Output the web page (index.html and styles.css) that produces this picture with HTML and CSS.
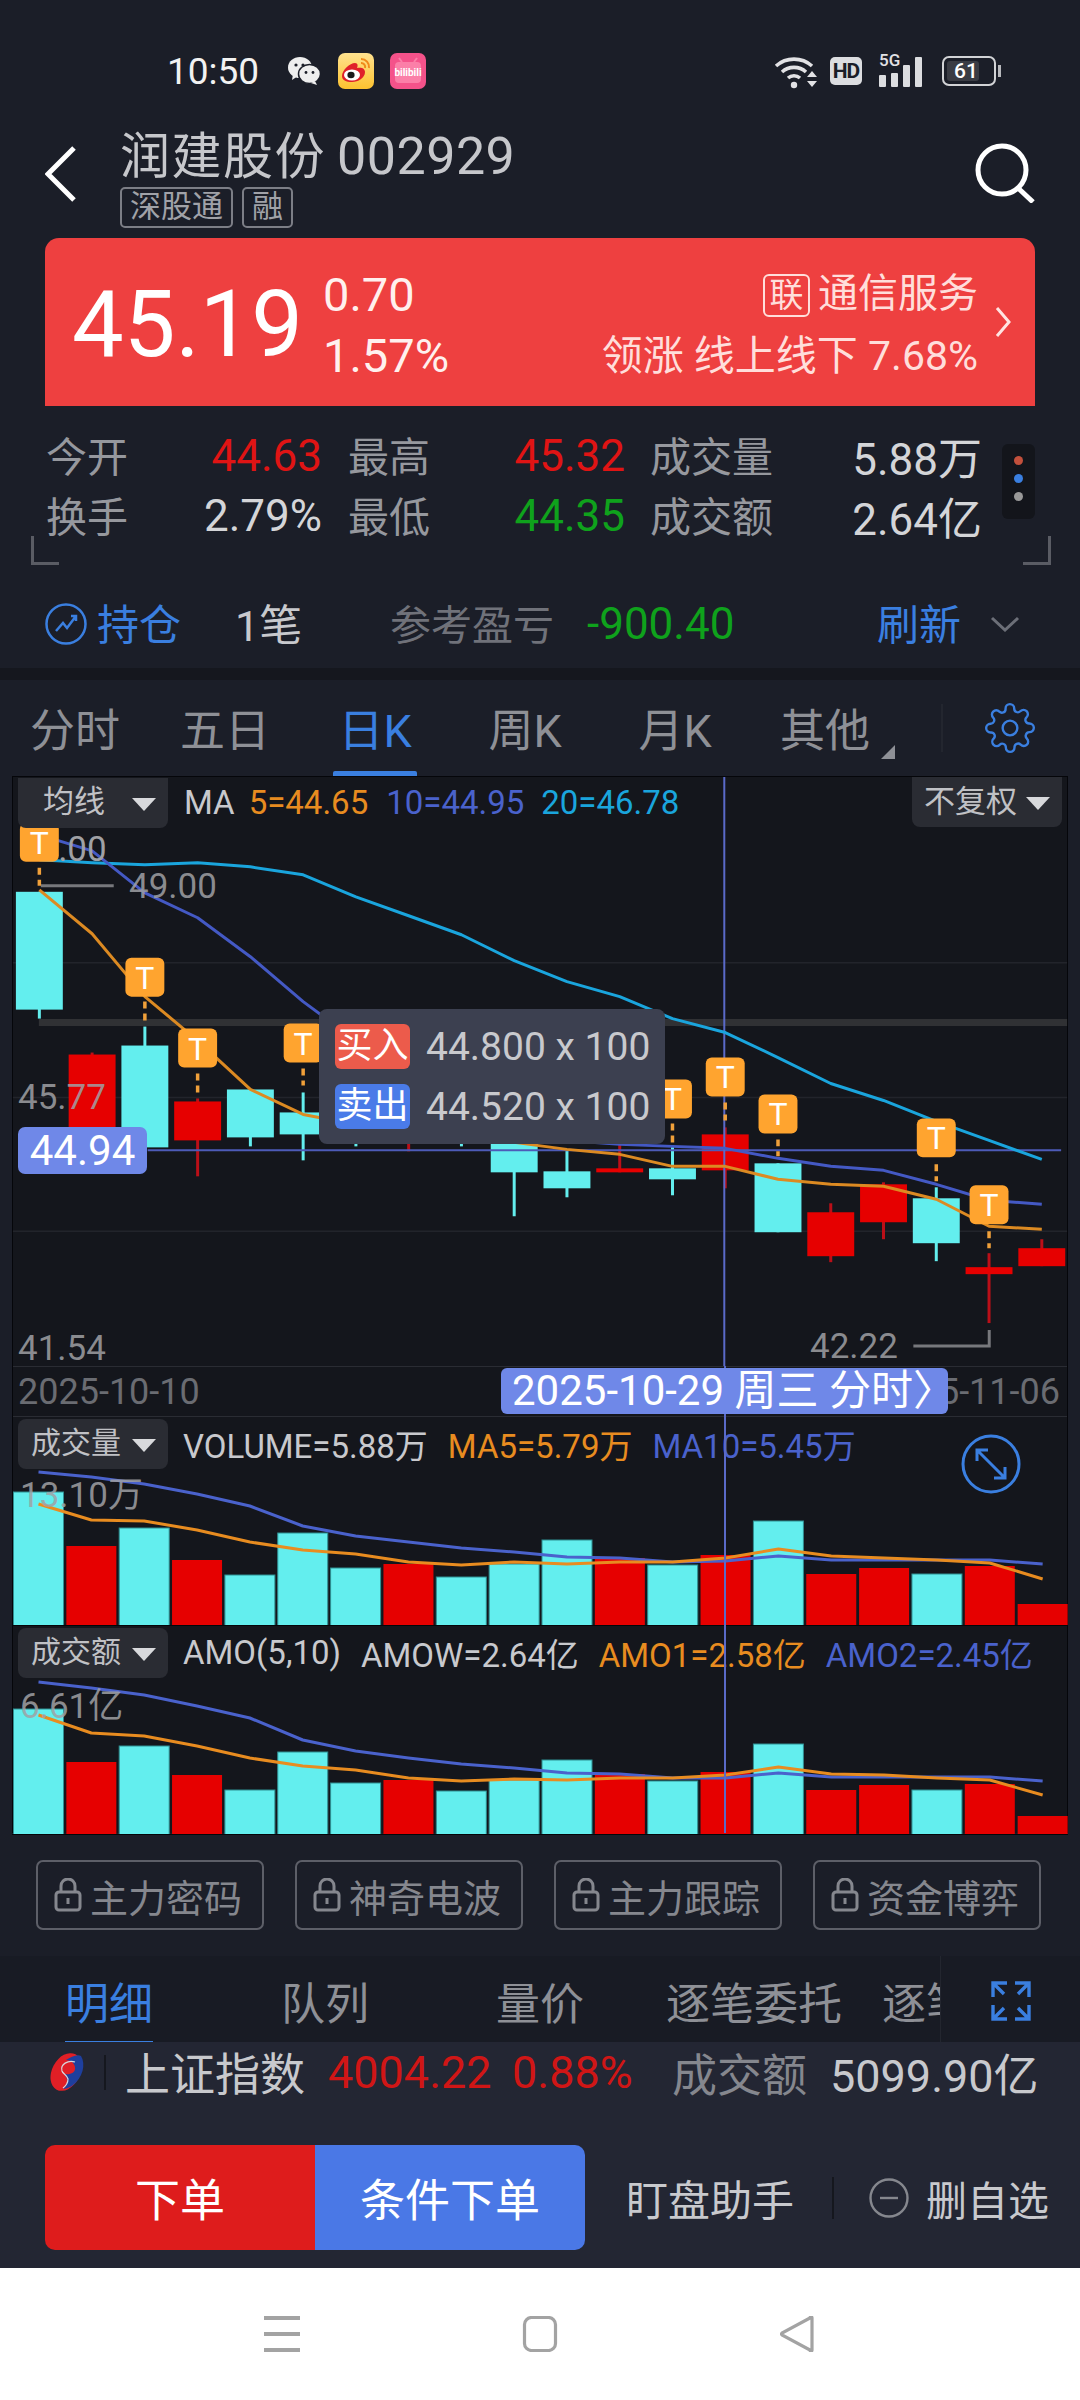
FILE: index.html
```html
<!DOCTYPE html>
<html lang="zh-CN">
  <head>
    <meta charset="UTF-8" />
    <meta name="viewport" content="width=device-width, initial-scale=1.0" />
    <title>润建股份 002929</title>
    <link rel="stylesheet" href="styles.css">
  </head>
  <body>
    <div class="status">
      <span class="clock">10:50</span>
      <svg class="ic-wechat" viewBox="0 0 32 28">
        <ellipse cx="12" cy="10.5" rx="12" ry="10.5" fill="#eee"/>
        <path d="M5 17l-1 6 6-4z" fill="#eee"/>
        <ellipse cx="21.5" cy="17" rx="11" ry="9.5" fill="#eee" stroke="#1b1e28" stroke-width="1.5"/>
        <path d="M27 24l2 4-6-2z" fill="#eee"/>
        <circle cx="8" cy="8" r="1.6" fill="#1b1e28"/><circle cx="15" cy="8" r="1.6" fill="#1b1e28"/>
        <circle cx="18" cy="15.5" r="1.4" fill="#1b1e28"/><circle cx="25" cy="15.5" r="1.4" fill="#1b1e28"/>
      </svg>
      <svg class="ic-app ic-weibo" viewBox="0 0 36 36">
        <defs><linearGradient id="wb" x1="0" y1="0" x2="0" y2="1"><stop offset="0" stop-color="#ffe28f"/><stop offset="1" stop-color="#fdc22f"/></linearGradient></defs>
        <rect width="36" height="36" rx="7" fill="url(#wb)"/>
        <path d="M4 23c0-6 8-13 13-13 3 0 3 3 2 5 4-1 8 0 8 4 0 6-7 10-13 10-6 0-10-2-10-6z" fill="#e0202a"/>
        <ellipse cx="14" cy="22" rx="8" ry="5.5" fill="#fff"/>
        <ellipse cx="13" cy="22" rx="3.6" ry="3.2" fill="#1a1a1a"/>
        <path d="M23 6a8 8 0 0 1 8 9M23 10a4 4 0 0 1 4 5" fill="none" stroke="#f08a1a" stroke-width="2"/>
      </svg>
      <svg class="ic-app ic-bili" viewBox="0 0 36 36">
        <rect width="36" height="36" rx="7" fill="#f4528a"/>
        <rect x="5" y="9" width="26" height="21" rx="4" fill="#fb7fa8"/>
        <path d="M12 9l-3-4M24 9l3-4" stroke="#fb7fa8" stroke-width="2"/>
        <text x="18" y="23" class="bili-word">bilibili</text>
      </svg>
      <div class="status-right">
        <svg class="ic-wifi" viewBox="0 0 43 35">
          <path d="M2 12a27 27 0 0 1 36 0M8 18a18 18 0 0 1 24 0M14 24a9 9 0 0 1 12 0" fill="none" stroke="#e2e2e5" stroke-width="3.6"/>
          <circle cx="20" cy="31" r="3.2" fill="#e2e2e5"/>
          <path d="M33 23l5-6 5 6zM33 27l10 0-5 6z" fill="#e2e2e5"/>
        </svg>
        <span class="hd">HD</span>
        <div class="signal">
          <span class="five-g">5G</span>
          <i class="bar b1"></i><i class="bar b2"></i><i class="bar b3"></i><i class="bar b4"></i>
        </div>
        <div class="battery"><span>61</span></div>
        <i class="battery-tip"></i>
      </div>
    </div>

    <header class="head">
      <svg class="back" viewBox="0 0 32 56"><path d="M29 2L3 28l26 26" fill="none" stroke="#fff" stroke-width="5"/></svg>
      <div class="head-title">
        <h1>润建股份<span>002929</span></h1>
        <div class="tags"><span>深股通</span><span>融</span></div>
      </div>
      <svg class="search" viewBox="0 0 60 60"><circle cx="27" cy="27" r="24" fill="none" stroke="#fff" stroke-width="5"/><path d="M43 45l15 14" stroke="#fff" stroke-width="5"/></svg>
    </header>

    <section class="quote">
      <div class="price">45.19</div>
      <div class="delta"><p>0.70</p><p>1.57%</p></div>
      <div class="sector">
        <p><b>联</b>通信服务</p>
        <p class="sector-lead">领涨 线上线下 7.68%</p>
      </div>
      <svg class="quote-arrow" viewBox="0 0 18 32"><path d="M3 2l12 14L3 30" fill="none" stroke="#ffe4e2" stroke-width="3"/></svg>
    </section>

    <section class="stats">
      <div class="stat-grid">
        <span class="lbl">今开</span><span class="val red">44.63</span>
        <span class="lbl lbl-b">最高</span><span class="val red">45.32</span>
        <span class="lbl lbl-c">成交量</span><span class="val">5.88万</span>
        <span class="lbl">换手</span><span class="val">2.79%</span>
        <span class="lbl lbl-b">最低</span><span class="val green">44.35</span>
        <span class="lbl lbl-c">成交额</span><span class="val">2.64亿</span>
      </div>
      <div class="dots"><i class="d-red"></i><i class="d-blue"></i><i class="d-grey"></i></div>
    </section>

    <section class="hold">
      <svg class="hold-ic" viewBox="0 0 42 42"><circle cx="21" cy="21" r="19.5" fill="none" stroke="#3a7fe0" stroke-width="2.5"/><path d="M11 28l7-8 4 5 9-12M26 13h5v5" fill="none" stroke="#3a7fe0" stroke-width="2.5"/></svg>
      <span class="hold-name">持仓</span>
      <span class="hold-count">1笔</span>
      <span class="hold-lbl">参考盈亏</span>
      <span class="hold-pnl">-900.40</span>
      <span class="hold-refresh">刷新</span>
      <svg class="hold-more" viewBox="0 0 30 16"><path d="M2 2l13 12L28 2" fill="none" stroke="#6c6f78" stroke-width="3"/></svg>
    </section>

    <div class="band"></div>

    <nav class="periods">
      <button>分时</button>
      <button>五日</button>
      <button class="valgt">日K</button>
      <button>周K</button>
      <button>月K</button>
      <button class="other">其他</button>
      <svg class="gear" viewBox="0 0 24 24"><circle cx="12" cy="12" r="3.4" fill="none" stroke="#3a7fe0" stroke-width="1.1"/><path d="M19.4 15a1.65 1.65 0 0 0 .33 1.82l.06.06a2 2 0 1 1-2.83 2.83l-.06-.06a1.65 1.65 0 0 0-2.82 1.17V21a2 2 0 1 1-4 0v-.09A1.65 1.65 0 0 0 7.3 19.7l-.06.06a2 2 0 1 1-2.83-2.83l.06-.06a1.65 1.65 0 0 0-1.17-2.82H3a2 2 0 1 1 0-4h.09A1.65 1.65 0 0 0 4.3 7.3l-.06-.06a2 2 0 1 1 2.83-2.83l.06.06a1.65 1.65 0 0 0 2.82-1.17V3a2 2 0 1 1 4 0v.09a1.65 1.65 0 0 0 2.82 1.17l.06-.06a2 2 0 1 1 2.83 2.83l-.06.06a1.65 1.65 0 0 0 1.17 2.82H21a2 2 0 1 1 0 4h-.09A1.65 1.65 0 0 0 19.4 15z" fill="none" stroke="#3a7fe0" stroke-width="1.1"/></svg>
    </nav>

    <section class="chart">
      <div class="pane pane-main">
        <svg id="svg-main" class="pane-svg" viewBox="12 776 1056 590"></svg>
        <div class="legend">
          <span class="pick">均线<i></i></span>
          <span class="lg-txt lg-ma">MA</span>
          <span class="orange">5=44.65</span>
          <span class="blue">10=44.95</span>
          <span class="sky">20=46.78</span>
          <span class="pick pick-right">不复权<i></i></span>
        </div>
        <span class="axis ax-max">49.00</span>
        <span class="axis ax-mid">45.77</span>
        <span class="axis ax-low">41.54</span>
        <span class="axis ax-min">42.22</span>
        <span class="now">44.94</span>
        <div class="trades">
          <p><b class="buy">买入</b>44.800 x 100</p>
          <p><b class="sell">卖出</b>44.520 x 100</p>
        </div>
      </div>

      <div class="dates">
        <span>2025-10-10</span><span>2025-11-06</span>
        <span class="date-pick">2025-10-29 周三 分时〉</span>
      </div>

      <div class="pane pane-vol">
        <svg id="svg-vol" class="pane-svg" viewBox="12 1417 1056 208"></svg>
        <div class="legend legend-sm">
          <span class="pick">成交量<i></i></span>
          <span class="lg-txt lg-first">VOLUME=5.88万</span>
          <span class="orange lg-next">MA5=5.79万</span>
          <span class="blue lg-next">MA10=5.45万</span>
        </div>
        <span class="axis ax-vol">13.10万</span>
        <svg class="zoom-ic" viewBox="0 0 60 60"><circle cx="30" cy="30" r="28" fill="none" stroke="#3a7fe0" stroke-width="3"/><path d="M16 16l28 28M16 27V16h11M44 33v11H33" fill="none" stroke="#3a7fe0" stroke-width="3"/></svg>
      </div>

      <div class="pane pane-amo">
        <svg id="svg-amo" class="pane-svg" viewBox="12 1625 1056 208"></svg>
        <div class="legend legend-sm">
          <span class="pick">成交额<i></i></span>
          <span class="lg-txt lg-first">AMO(5,10)</span>
          <span class="lg-txt lg-next">AMOW=2.64亿</span>
          <span class="orange lg-next">AMO1=2.58亿</span>
          <span class="blue lg-next">AMO2=2.45亿</span>
        </div>
        <span class="axis ax-amo">6.61亿</span>
      </div>

      <i class="cross-v"></i>
    </section>

    <section class="locks">
      <button><svg viewBox="0 0 28 34"><path d="M7 14V8a7 7 0 0 1 14 0v6" fill="none" stroke="#85878e" stroke-width="3"/><rect x="2" y="14" width="24" height="18" rx="3" fill="none" stroke="#85878e" stroke-width="3"/><rect x="12.5" y="20" width="3" height="6" fill="#85878e"/></svg>主力密码</button>
      <button><svg viewBox="0 0 28 34"><path d="M7 14V8a7 7 0 0 1 14 0v6" fill="none" stroke="#85878e" stroke-width="3"/><rect x="2" y="14" width="24" height="18" rx="3" fill="none" stroke="#85878e" stroke-width="3"/><rect x="12.5" y="20" width="3" height="6" fill="#85878e"/></svg>神奇电波</button>
      <button><svg viewBox="0 0 28 34"><path d="M7 14V8a7 7 0 0 1 14 0v6" fill="none" stroke="#85878e" stroke-width="3"/><rect x="2" y="14" width="24" height="18" rx="3" fill="none" stroke="#85878e" stroke-width="3"/><rect x="12.5" y="20" width="3" height="6" fill="#85878e"/></svg>主力跟踪</button>
      <button><svg viewBox="0 0 28 34"><path d="M7 14V8a7 7 0 0 1 14 0v6" fill="none" stroke="#85878e" stroke-width="3"/><rect x="2" y="14" width="24" height="18" rx="3" fill="none" stroke="#85878e" stroke-width="3"/><rect x="12.5" y="20" width="3" height="6" fill="#85878e"/></svg>资金博弈</button>
    </section>

    <nav class="details">
      <div class="detail-tabs">
        <button class="valgt">明细</button>
        <button class="t-queue">队列</button>
        <button class="t-price">量价</button>
        <button class="t-order">逐笔委托</button>
        <button class="t-deal">逐笔成交</button>
      </div>
      <svg class="full-ic" viewBox="0 0 42 42"><path d="M3 17V3h14M3 3l11 11M39 17V3H25M39 3L28 14M3 25v14h14M3 39l11-11M39 25v14H25M39 39L28 28" fill="none" stroke="#3a7fe0" stroke-width="3.4"/></svg>
    </nav>

    <section class="index-row">
      <svg class="sh-logo" viewBox="0 0 42 38"><ellipse cx="21" cy="19" rx="14" ry="20" transform="rotate(28 21 19)" fill="#e01f26"/><path d="M36 3c5 8 2 22-9 30-3 2-7 3-9 3 7-5 4-12 1-15 6 1 12-1 11-7-1-4-4-7-9-7 5-3 11-6 15-4z" fill="#1e3f9e"/><path d="M30 9c-7-2-15 2-13 9 1 3 5 4 6 8 0 3-1 6-5 9" fill="none" stroke="#d8d8de" stroke-width="1.2"/></svg>
      <i class="index-sep"></i>
      <span class="index-name">上证指数</span>
      <span class="index-val">4004.22</span>
      <span class="index-pct">0.88%</span>
      <span class="index-lbl">成交额</span>
      <span class="index-amt">5099.90亿</span>
    </section>

    <section class="actions">
      <button class="act-buy">下单</button>
      <button class="act-cond">条件下单</button>
      <span class="act-watch">盯盘助手</span>
      <i class="act-sep"></i>
      <svg class="act-ic" viewBox="0 0 40 42"><circle cx="20" cy="21" r="18.5" fill="none" stroke="#85878e" stroke-width="2.4"/><path d="M11 21h18" stroke="#85878e" stroke-width="2.4"/></svg>
      <span class="act-del">删自选</span>
    </section>

    <footer class="sysnav">
      <svg class="nav-ic" viewBox="0 0 36 36"><path d="M0 2h36M0 18h36M0 34h36" stroke="#a3a3a3" stroke-width="4"/></svg>
      <svg class="nav-ic" viewBox="0 0 36 36"><rect x="2.5" y="1.500" width="31" height="33" rx="7" fill="none" stroke="#a3a3a3" stroke-width="3.200"/></svg>
      <svg class="nav-ic" viewBox="0 0 36 36"><path d="M33 2v32a1 1 0 0 1-2 0L3 19a1.500 1.500 0 0 1 0-2L31 2a1 1 0 0 1 2 0z" fill="none" stroke="#a3a3a3" stroke-width="3.200"/></svg>
    </footer>

    <script src="chart.js"></script>
  </body>
</html>
```

FILE: styles.css
```css
* {
  box-sizing: border-box;
}
html,
body {
  margin: 0;
  padding: 0;
}
body {
  width: 1080px;
  height: 2400px;
  overflow: hidden;
  background-color: #1b1e28;
  font-family: Roboto, "Noto Sans CJK SC", sans-serif;
  color: #c8c9cd;
}
p,
h1 {
  margin: 0;
  font-weight: 400;
}
i {
  display: block;
}
button {
  background: none;
  border: none;
  padding: 0;
  font: inherit;
  color: inherit;
}
svg {
  display: block;
  flex: none;
}

/* status bar */
.status {
  height: 120px;
  display: flex;
  align-items: center;
  padding: 22px 0 0 167px;
  position: relative;
}
.clock {
  font-size: 37px;
  color: #f2f2f2;
  width: 121px;
}
.ic-wechat {
  width: 32px;
  height: 28px;
  margin-right: 18px;
}
.ic-app {
  width: 36px;
  height: 36px;
  margin-right: 16px;
}
.bili-word {
  font-size: 10px;
  font-weight: 700;
  fill: #fff;
  text-anchor: middle;
}
.status-right {
  margin-left: auto;
  display: flex;
  align-items: center;
  padding-right: 79px;
}
.ic-wifi {
  width: 43px;
  height: 35px;
  margin-right: 13px;
}
.hd {
  width: 32px;
  height: 28px;
  border-radius: 5px;
  background-color: #dcdde0;
  color: #1b1e28;
  font-size: 21px;
  font-weight: 700;
  letter-spacing: -1px;
  line-height: 28px;
  text-align: center;
  margin-right: 17px;
}
.signal {
  width: 47px;
  height: 32px;
  display: flex;
  align-items: flex-end;
  gap: 5px;
  position: relative;
  margin-right: 16px;
}
.five-g {
  position: absolute;
  left: 0;
  top: -4px;
  font-size: 17px;
  font-weight: 500;
  color: #e2e2e5;
  line-height: 18px;
}
.bar {
  width: 7px;
  background-color: #dcdde0;
  border-radius: 1px;
}
.b1 { height: 12px; }
.b2 { height: 14px; }
.b3 { height: 22px; }
.b4 { height: 30px; }
.battery {
  width: 54px;
  height: 30px;
  border: 2px solid #d2d3d6;
  border-radius: 7px;
  padding: 3px;
}
.battery span {
  display: block;
  width: 32px;
  height: 20px;
  background-color: #3a3c44;
  border-radius: 3px;
  font-size: 21px;
  font-weight: 500;
  line-height: 20px;
  color: #fff;
  padding-left: 7px;
}
.battery-tip {
  width: 3px;
  height: 12px;
  margin-left: 2px;
  background-color: #b8b9bd;
}

/* title */
.head {
  height: 118px;
  padding-left: 45px;
  padding-right: 45px;
  display: flex;
  align-items: flex-start;
}
.back {
  width: 32px;
  height: 56px;
  margin-top: 26px;
  margin-right: 43px;
}
.head-title {
  padding-top: 7px;
}
.head-title h1 {
  font-size: 50px;
  letter-spacing: 1.5px;
  line-height: 60px;
  color: #c6c7cb;
}
.head-title h1 span {
  font-size: 52px;
  letter-spacing: 0.5px;
  margin-left: 11px;
}
.tags {
  display: flex;
  gap: 9px;
}
.tags span {
  height: 41px;
  border: 2px solid #7c7e86;
  border-radius: 5px;
  padding: 0 8px;
  font-size: 31px;
  line-height: 36px;
  color: #a0a2a8;
}
.search {
  width: 60px;
  height: 60px;
  margin-left: auto;
  margin-top: 23px;
}

/* red quote card */
.quote {
  height: 168px;
  margin: 0 45px;
  padding: 0 23px 0 27px;
  border-radius: 14px 14px 0 0;
  background-color: #ee4040;
  color: #fff;
  display: flex;
  align-items: center;
}
.price {
  font-size: 92px;
  width: 251px;
  margin-bottom: -4px;
}
.delta {
  font-size: 47px;
  line-height: 61px;
  color: #fff0ee;
  padding-top: 5px;
}
.sector {
  margin-left: auto;
  text-align: right;
  color: #ffdedb;
  font-size: 40px;
  line-height: 63px;
  padding-top: 5px;
}
.sector-lead {
  font-size: 41px;
}
.sector b {
  display: inline-block;
  width: 47px;
  height: 43px;
  border: 2px solid #ffdedb;
  border-radius: 6px;
  margin-right: 8px;
  font-size: 34px;
  font-weight: 400;
  line-height: 38px;
  text-align: center;
}
.quote-arrow {
  width: 18px;
  height: 32px;
  margin-left: 16px;
}

/* open / high / low */
.stats {
  height: 162px;
  padding: 20px 0 0 46px;
  display: flex;
  align-items: flex-start;
  position: relative;
}
.stats::before,
.stats::after {
  content: "";
  position: absolute;
  top: 130px;
  width: 25px;
  height: 26px;
  border-bottom: 3px solid #5a5c64;
}
.stats::before {
  left: 31px;
  border-left: 3px solid #5a5c64;
}
.stats::after {
  left: 1023px;
  border-right: 3px solid #5a5c64;
}
.stat-grid {
  display: grid;
  grid-template-columns: 90px 186px 116px 187px 155px 202px;
  width: 936px;
  grid-auto-rows: 60px;
  align-items: center;
  white-space: nowrap;
}
.lbl {
  font-size: 41px;
  color: #96989e;
  margin-top: -5px;
}
.lbl-b {
  margin-left: 26px;
}
.lbl-c {
  margin-left: 25px;
}
.val {
  font-size: 44px;
  text-align: right;
  color: #d4d5d8;
}
.stat-grid .val.red {
  color: #e01414;
}
.stat-grid .val.green {
  color: #0fa21c;
}
.dots {
  width: 33px;
  height: 75px;
  margin-left: 20px;
  margin-top: 18px;
  padding: 12px 0;
  border-radius: 6px;
  background-color: #13151b;
  display: flex;
  flex-direction: column;
  align-items: center;
  gap: 9px;
}
.dots i {
  width: 9px;
  height: 9px;
  border-radius: 50%;
}
.d-red { background-color: #c2503c; }
.d-blue { background-color: #3a7fe0; }
.d-grey { background-color: #999; }

/* position row */
.hold {
  height: 100px;
  padding: 12px 0 0 45px;
  display: flex;
  align-items: center;
  font-size: 42px;
}
.hold-ic {
  width: 42px;
  height: 42px;
  margin-right: 10px;
}
.hold-name {
  color: #3a7fe0;
  width: 138px;
  margin-top: -5px;
}
.hold-count {
  font-size: 43px;
  color: #c8c9cd;
  width: 155px;
  margin-top: -5px;
}
.hold-lbl {
  color: #70727a;
  width: 197px;
  margin-top: -5px;
  font-size: 41px;
}
.hold-pnl {
  font-size: 44px;
  color: #0fa21c;
  width: 290px;
}
.hold-refresh {
  color: #3a7fe0;
  width: 113px;
  margin-top: -5px;
}
.hold-more {
  width: 30px;
  height: 16px;
}

.band {
  height: 12px;
  background-color: #15171e;
}

/* period tabs */
.periods {
  height: 96px;
  display: flex;
  align-items: center;
  font-size: 45px;
  color: #8e9096;
  position: relative;
}
.periods button {
  width: 150px;
  height: 96px;
  padding-bottom: 2px;
  position: relative;
}
.periods .valgt {
  color: #3a7fe0;
}
.periods .valgt::after {
  content: "";
  position: absolute;
  left: 33px;
  bottom: 0;
  width: 84px;
  height: 5px;
  background-color: #3a7fe0;
  border-radius: 2px 2px 0 0;
}
.periods .other::after {
  content: "";
  position: absolute;
  right: 5px;
  top: 65px;
  border-left: 14px solid transparent;
  border-bottom: 14px solid #8e9096;
}
.gear {
  width: 52px;
  height: 52px;
  position: absolute;
  left: 984px;
  top: 22px;
}
.periods::after {
  content: "";
  position: absolute;
  left: 941px;
  top: 24px;
  width: 2px;
  height: 48px;
  background-color: #23262f;
}

/* chart panes */
.chart {
  width: 1056px;
  height: 1057px;
  margin-left: 12px;
  position: relative;
  background-color: #14161c;
  border-top: 1px solid #05060a;
  border-left: 1px solid #05060a;
  border-right: 1px solid #05060a;
  font-size: 32px;
}
.pane {
  position: relative;
  width: 1054px;
}
.pane-main {
  height: 589px;
}
.pane-vol,
.pane-amo {
  height: 208px;
}
.pane-svg {
  position: absolute;
  left: -1px;
  top: 0;
  width: 1056px;
  height: 100%;
}
.axis-top {
  font-size: 35px;
  fill: #a0a1a5;
}
.t-mark {
  font-size: 32px;
  fill: #fff;
  text-anchor: middle;
}
.legend {
  position: relative;
  height: 50px;
  display: flex;
  align-items: center;
  font-size: 33px;
  padding-left: 5px;
  padding-top: 1px;
  white-space: nowrap;
}
.legend-sm {
  margin-top: 1px;
}
.pick {
  width: 150px;
  height: 50px;
  padding-left: 25px;
  border-radius: 0 0 8px 8px;
  background-color: #2a2c33;
  color: #c0c1c5;
  font-size: 31px;
  line-height: 48px;
  position: relative;
  flex: none;
}
.legend-sm .pick {
  border-radius: 8px;
  padding-left: 13px;
  font-size: 30px;
}
.pick i {
  position: absolute;
  right: 12px;
  top: 20px;
  border-left: 12px solid transparent;
  border-right: 12px solid transparent;
  border-top: 13px solid #d8d9dc;
}
.pick-right {
  position: absolute;
  left: 899px;
  top: 0;
  padding-left: 12px;
  line-height: 50px;
}
.lg-txt {
  color: #c8c9cd;
}
.lg-ma {
  margin-left: 16px;
  margin-right: 14px;
}
.orange {
  color: #e88c20;
}
.blue {
  color: #4a62cc;
  margin-left: 18px;
}
.sky {
  color: #1aa5dd;
  margin-left: 17px;
}
.legend-sm .lg-first {
  margin-left: 15px;
}
.legend-sm .lg-next {
  margin-left: 20px;
}

.axis {
  position: absolute;
  font-size: 35px;
  line-height: 40px;
  color: rgba(160, 161, 165, 0.85);
}
.ax-max { left: 116px; top: 90px; }
.ax-mid { left: 5px; top: 301px; }
.ax-low { left: 5px; top: 552px; }
.ax-min { left: 797px; top: 550px; }
.ax-vol { left: 7px; top: 58px; }
.ax-amo { left: 7px; top: 60px; }
.now {
  position: absolute;
  left: 5px;
  top: 350px;
  width: 129px;
  height: 47px;
  border-radius: 7px;
  background-color: #6f88e8;
  color: #fff;
  font-size: 42px;
  line-height: 47px;
  text-align: center;
}
.trades {
  position: absolute;
  left: 306px;
  top: 232px;
  width: 346px;
  height: 135px;
  padding: 15px 0 0 16px;
  border-radius: 8px;
  background-color: #3c4050;
  font-size: 39px;
  color: #c8c9cd;
  white-space: nowrap;
}
.trades p {
  height: 60px;
  display: flex;
  align-items: flex-start;
}
.trades b {
  width: 75px;
  height: 45px;
  margin-right: 16px;
  border-radius: 6px;
  font-size: 36px;
  font-weight: 400;
  line-height: 44px;
  color: #fff;
  text-align: center;
}
.buy { background-color: #ec5b4b; }
.sell { background-color: #4a7be8; }

.dates {
  height: 51px;
  position: relative;
  display: flex;
  justify-content: space-between;
  align-items: center;
  padding: 0 7px 0 5px;
  font-size: 36px;
  color: #6a6c72;
  border-top: 1px solid #2a2c33;
  border-bottom: 1px solid #2a2c33;
}
.date-pick {
  position: absolute;
  left: 488px;
  top: 1px;
  width: 447px;
  height: 46px;
  border-radius: 6px;
  z-index: 2;
  background-color: #6f88e8;
  color: #fff;
  font-size: 42px;
  line-height: 46px;
  padding-left: 11px;
  white-space: nowrap;
}
.zoom-ic {
  position: absolute;
  left: 948px;
  top: 16px;
  width: 60px;
  height: 60px;
}
/* the part of the crosshair over the two lower panes; the main pane draws its own */
.cross-v {
  position: absolute;
  left: 711px;
  top: 589px;
  width: 2px;
  height: 467px;
  background-color: #5a6ac8;
}

/* locked indicators */
.locks {
  height: 123px;
  padding: 27px 39px 0 36px;
  display: flex;
  justify-content: space-between;
}
.locks button {
  width: 228px;
  height: 70px;
  border: 2px solid #5d5f68;
  border-radius: 7px;
  display: flex;
  align-items: center;
  padding-left: 16px;
  font-size: 38px;
  color: #85878e;
  white-space: nowrap;
}
.locks svg {
  width: 28px;
  height: 34px;
  margin-right: 8px;
}

/* detail tabs */
.details {
  height: 86px;
  background-color: #181b24;
  position: relative;
  display: flex;
  align-items: center;
}
.detail-tabs {
  width: 941px;
  height: 86px;
  overflow: hidden;
  display: flex;
  align-items: center;
  font-size: 44px;
  color: #8e9096;
  white-space: nowrap;
  border-right: 1px solid #23262f;
}
.detail-tabs button {
  height: 86px;
  padding-top: 3px;
  flex: none;
  position: relative;
}
.detail-tabs .valgt {
  color: #3a7fe0;
  margin-left: 65px;
}
.detail-tabs .valgt::after {
  content: "";
  position: absolute;
  left: 0;
  right: 0;
  bottom: 0;
  height: 1px;
  background-color: #3a7fe0;
}
.t-queue { margin-left: 128px; }
.t-price { margin-left: 127px; }
.t-order { margin-left: 82px; }
.t-deal { margin-left: 40px; }
.full-ic {
  width: 42px;
  height: 42px;
  margin-left: 49px;
  margin-top: 3px;
}

/* index ticker */
.index-row {
  height: 60px;
  background-color: #232633;
  padding-left: 45px;
  display: flex;
  align-items: center;
  font-size: 45px;
  white-space: nowrap;
}
.sh-logo {
  width: 42px;
  height: 38px;
}
.index-sep {
  width: 2px;
  height: 35px;
  margin: 0 19px 0 17px;
  background-color: #15171e;
}
.index-name {
  color: #c8c9cd;
  width: 203px;
  margin-top: -2px;
}
.index-val {
  color: #d01616;
  width: 184px;
}
.index-pct {
  color: #d01616;
  width: 160px;
}
.index-lbl {
  color: #85878e;
  width: 158px;
}
.index-amt {
  color: #c8c9cd;
}

/* order buttons */
.actions {
  height: 166px;
  padding: 43px 0 18px 45px;
  background-color: #232633;
  display: flex;
  align-items: center;
  font-size: 42px;
}
.actions button {
  width: 270px;
  height: 105px;
  color: #fff;
  font-size: 45px;
}
.act-buy {
  background-color: #de1c1c;
  border-radius: 10px 0 0 10px;
}
.act-cond {
  background-color: #4a78e6;
  border-radius: 0 10px 10px 0;
}
.act-watch {
  color: #c8c9cd;
  margin-left: 41px;
  width: 206px;
}
.act-sep {
  width: 2px;
  height: 42px;
  background-color: #15171e;
  margin-right: 35px;
}
.act-ic {
  width: 40px;
  height: 42px;
  margin-right: 17px;
}
.act-del {
  color: #c8c9cd;
  font-size: 41px;
}

/* android nav bar */
.sysnav {
  height: 132px;
  background-color: #fff;
  padding: 48px 265px 0 264px;
  display: flex;
  justify-content: space-between;
  align-items: flex-start;
}
.nav-ic {
  width: 36px;
  height: 36px;
}
```

FILE: chart.js
```js
const SVGNS = "http://www.w3.org/2000/svg";
const CYAN = "#63eeee";
const CYAN_EDGE = "#2f8f92";
const RED = "#e60000";
const WICK_RED = "#bb0f18";
const CROSS_X = 724.6;

const slotX = (i) => 38.5 + 52.85 * i;

// kind, body top, body bottom, wick top, wick bottom
const candles = [
  ["up", 891, 1009, 891, 1018],
  ["dn", 1054, 1150, 1052, 1150],
  ["up", 1045, 1147, 1026, 1147],
  ["dn", 1101, 1140, 1098, 1176],
  ["up", 1089, 1137, 1089, 1146],
  ["up", 1112, 1134, 1092, 1160],
  ["up", 1100, 1130, 1090, 1146],
  ["dn", 1105, 1135, 1100, 1151],
  ["up", 1110, 1130, 1100, 1146],
  ["up", 1130, 1172, 1120, 1216],
  ["up", 1171, 1188, 1150, 1197],
  ["dn", 1168, 1172, 1144, 1172],
  ["up", 1168, 1179, 1146, 1195],
  ["dn", 1134, 1170, 1127, 1188],
  ["up", 1163, 1232, 1163, 1232],
  ["dn", 1212, 1256, 1203, 1262],
  ["dn", 1184, 1222, 1182, 1239],
  ["up", 1198, 1243, 1187, 1261],
  ["dn", 1267, 1274, 1253, 1323],
  ["dn", 1248, 1266, 1239, 1266],
];

const ma5 = [889, 933, 996, 1040, 1089, 1114, 1124, 1132, 1138, 1142, 1149, 1154, 1166, 1166, 1179, 1184, 1186, 1199, 1226, 1229];
const ma10 = [834, 850, 892, 917, 956, 1001, 1040, 1080, 1110, 1130, 1140, 1144, 1146, 1148, 1158, 1166, 1170, 1184, 1200, 1204];
const ma20 = [859, 862, 864, 862, 866, 874, 896, 915, 934, 960, 981, 996, 1018, 1032, 1057, 1083, 1100, 1121, 1140, 1159];

// candle index, badge top, dotted stem top and bottom
const marks = [
  [0, 822, 867, 885],
  [2, 957, 1001, 1020],
  [3, 1028, 1073, 1095],
  [5, 1023, 1068, 1085],
  [12, 1079, 1123, 1143],
  [13, 1057, 1102, 1120],
  [14, 1094, 1139, 1156],
  [17, 1118, 1164, 1181],
  [18, 1185, 1231, 1248],
];

const barKinds = ["u", "d", "u", "d", "u", "u", "u", "d", "u", "u", "u", "d", "u", "d", "u", "d", "d", "u", "d", "d"];
const volTops = [1491, 1545, 1527, 1559, 1574, 1532, 1567, 1563, 1576, 1563, 1539, 1557, 1564, 1554, 1520, 1573, 1567, 1573, 1565, 1603];
const volMa5 = [1503, 1519, 1520, 1529, 1541, 1549, 1553, 1561, 1564, 1561, 1563, 1561, 1561, 1557, 1548, 1555, 1557, 1559, 1562, 1578];
const volMa10 = [1471, 1476, 1483, 1493, 1505, 1525, 1535, 1541, 1547, 1551, 1556, 1557, 1561, 1560, 1555, 1559, 1559, 1559, 1559, 1563];

const amoTops = [1707, 1760, 1744, 1773, 1788, 1750, 1781, 1778, 1789, 1778, 1758, 1772, 1779, 1770, 1742, 1788, 1783, 1788, 1782, 1814];
const amoMa5 = [1713, 1731, 1734, 1744, 1756, 1764, 1768, 1776, 1779, 1777, 1778, 1776, 1776, 1773, 1765, 1772, 1773, 1776, 1778, 1793];
const amoMa10 = [1680, 1686, 1693, 1704, 1716, 1738, 1749, 1756, 1762, 1766, 1771, 1772, 1776, 1776, 1771, 1775, 1775, 1775, 1775, 1779];

function el(parent, name, attrs, text) {
  const node = document.createElementNS(SVGNS, name);
  Object.keys(attrs).forEach((key) => node.setAttribute(key, attrs[key]));
  if (text) node.textContent = text;
  parent.appendChild(node);
  return node;
}

function hline(svg, y, x1, x2, color, width) {
  el(svg, "line", { x1: x1, x2: x2, y1: y, y2: y, stroke: color, "stroke-width": width });
}

function maLine(svg, ys, color) {
  const points = ys.map((y, i) => `${slotX(i)},${y}`).join(" ");
  el(svg, "polyline", { points: points, fill: "none", stroke: color, "stroke-width": 3, "stroke-linejoin": "round" });
}

function drawMain(svg) {
  [962, 1097, 1231].forEach((y) => hline(svg, y, 12, 1068, "#22242b", 1.5));
  hline(svg, 1022, 38, 1068, "#303134", 7);

  candles.forEach((c, i) => {
    const x = slotX(i);
    const up = c[0] == "up";
    el(svg, "line", { x1: x, x2: x, y1: c[3], y2: c[4], stroke: up ? CYAN : WICK_RED, "stroke-width": 3 });
    el(svg, "rect", { x: x - 23.5, y: c[1], width: 47, height: c[2] - c[1], fill: up ? CYAN : RED });
  });

  // crosshair, drawn before the lines and badges so those stay on top
  hline(svg, 1150, 147, 1062, "#4d5bb8", 2);
  el(svg, "line", { x1: CROSS_X, x2: CROSS_X, y1: 776, y2: 1366, stroke: "#5a6ac8", "stroke-width": 2 });

  maLine(svg, ma20, "#1aa5dd");
  maLine(svg, ma10, "#4459c4");
  maLine(svg, ma5, "#dc8a22");

  // top of the price scale, sits under the first badge
  el(svg, "text", { x: 18, y: 860, class: "axis-top" }, "50.00");

  // max and min leader lines
  hline(svg, 885, 40, 113, "#77787c", 3);
  el(svg, "polyline", { points: "914,1346 990,1346 990,1330", fill: "none", stroke: "#77787c", "stroke-width": 3 });

  marks.forEach((m) => {
    const x = slotX(m[0]);
    el(svg, "line", { x1: x, x2: x, y1: m[2], y2: m[3], stroke: "#f0a03a", "stroke-width": 3.5, "stroke-dasharray": "7 5" });
    el(svg, "rect", { x: x - 19.5, y: m[1], width: 39, height: 39, rx: 6, fill: "#ffa42f" });
    el(svg, "text", { x: x, y: m[1] + 31, class: "t-mark" }, "T");
  });
}

function drawBars(svg, baseline, tops, lineA, lineB) {
  tops.forEach((top, i) => {
    const up = barKinds[i] == "u";
    el(svg, "rect", {
      x: slotX(i) - 25,
      y: top,
      width: 50,
      height: baseline - top,
      fill: up ? CYAN : RED,
      stroke: up ? CYAN_EDGE : "none",
    });
  });
  hline(svg, baseline, 12, 1068, "#05060a", 2);
  maLine(svg, lineB, "#4a62cc");
  maLine(svg, lineA, "#e88c20");
}

drawMain(document.querySelector("#svg-main"));
drawBars(document.querySelector("#svg-vol"), 1625, volTops, volMa5, volMa10);
drawBars(document.querySelector("#svg-amo"), 1833, amoTops, amoMa5, amoMa10);
```
